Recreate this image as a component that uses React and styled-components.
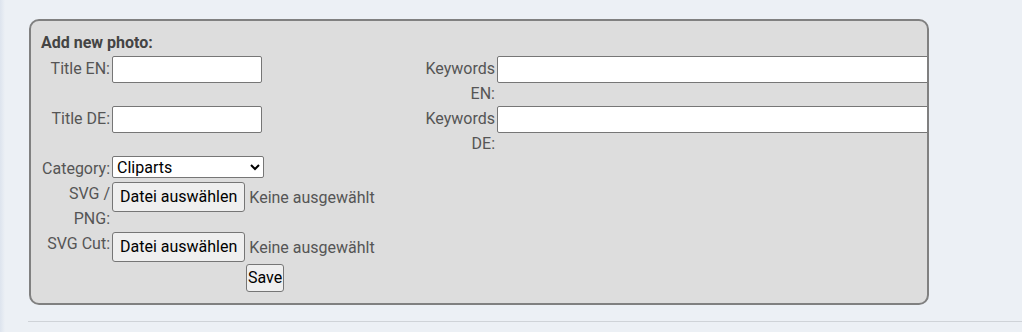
import React from "react";
import styled, { createGlobalStyle } from "styled-components";

const GlobalStyle = createGlobalStyle`
  html, body {
    margin: 0;
    padding: 0;
    background: #ecf0f5;
    font-family: Roboto, "Liberation Sans", Arial, sans-serif;
  }
`;

const Page = styled.div`
  min-height: 332px;
  padding: 19px 0 0 28px;
  box-sizing: border-box;
  background: linear-gradient(to right, #dde4ee 0, #e6ebf2 3px, #ecf0f5 5px);
  overflow: hidden;
`;

const Panel = styled.form`
  box-sizing: border-box;
  width: 900px;
  margin: 0 0 16px 1px;
  padding: 9px 10px 11px 10px;
  background: #dddddd;
  border: 2px solid #808080;
  border-radius: 10px;
  overflow: hidden;
`;

const Heading = styled.div`
  font-weight: bold;
  font-size: 16px;
  line-height: 25px;
  color: #444;
  margin-bottom: 1px;
`;

const FormGrid = styled.div`
  display: grid;
  grid-template-columns: 69px 309px 72px 450px;
  column-gap: 2px;
  align-items: start;
  font-size: 16px;
  line-height: 25px;
  color: #555;
`;

const Label = styled.label`
  text-align: right;
  grid-column: ${(p) => p.$col || 1};
`;

const Field = styled.div`
  grid-column: ${(p) => p.$col || 2} / span ${(p) => p.$span || 1};
  display: flex;
  align-items: center;
`;

const TextInput = styled.input`
  box-sizing: border-box;
  width: ${(p) => p.$width}px;
  height: 27px;
  margin: 0;
  padding: 1px 3px;
  background: #fff;
  border: 1px solid #767676;
  border-radius: 2px;
  font: 16px Roboto, "Liberation Sans", sans-serif;
  outline: none;
`;

const Select = styled.select`
  box-sizing: border-box;
  width: 152px;
  height: 22px;
  margin: 0;
  background: #fff;
  border: 1px solid #767676;
  border-radius: 2px;
  color: #000;
  font: 16px Roboto, "Liberation Sans", sans-serif;
`;

const Button = styled.button`
  box-sizing: border-box;
  height: ${(p) => p.$height}px;
  margin: ${(p) => p.$mt}px 0 0 ${(p) => p.$ml || 0}px;
  padding: 0 ${(p) => p.$px}px;
  background: #efefef;
  border: 1px solid #767676;
  border-radius: 3px;
  color: #000;
  font: 16px Roboto, "Liberation Sans", sans-serif;
  line-height: 1;
`;

const FileStatus = styled.span`
  margin: 1px 0 0 4px;
  color: #555;
  white-space: nowrap;
`;

const Rule = styled.hr`
  margin: 0;
  border: 0;
  border-top: 1px solid #cfd3d8;
  width: 1200px;
`;

function FilePicker() {
  return (
    <Field $col={2}>
      <Button type="button" $height={30} $mt={1} $px={7}>
        Datei auswählen
      </Button>
      <FileStatus>Keine ausgewählt</FileStatus>
    </Field>
  );
}

export default function App() {
  return (
    <>
      <GlobalStyle />
      <Page>
        <Panel onSubmit={(e) => e.preventDefault()}>
          <Heading>Add new photo:</Heading>
          <FormGrid>
            <Label>Title EN:</Label>
            <Field $col={2}>
              <TextInput $width={150} />
            </Field>
            <Label $col={3}>Keywords EN:</Label>
            <Field $col={4}>
              <TextInput $width={450} />
            </Field>

            <Label>Title DE:</Label>
            <Field $col={2}>
              <TextInput $width={150} />
            </Field>
            <Label $col={3}>Keywords DE:</Label>
            <Field $col={4}>
              <TextInput $width={450} />
            </Field>

            <Label>Category:</Label>
            <Field $col={2}>
              <Select defaultValue="Cliparts">
                <option>Cliparts</option>
                <option>Fotos</option>
                <option>Icons</option>
              </Select>
            </Field>

            <Label>SVG / PNG:</Label>
            <FilePicker />

            <Label>SVG Cut:</Label>
            <FilePicker />

            <Field $col={2}>
              <Button type="submit" $height={28} $mt={2} $ml={134} $px={1}>
                Save
              </Button>
            </Field>
          </FormGrid>
        </Panel>
        <Rule />
      </Page>
    </>
  );
}
